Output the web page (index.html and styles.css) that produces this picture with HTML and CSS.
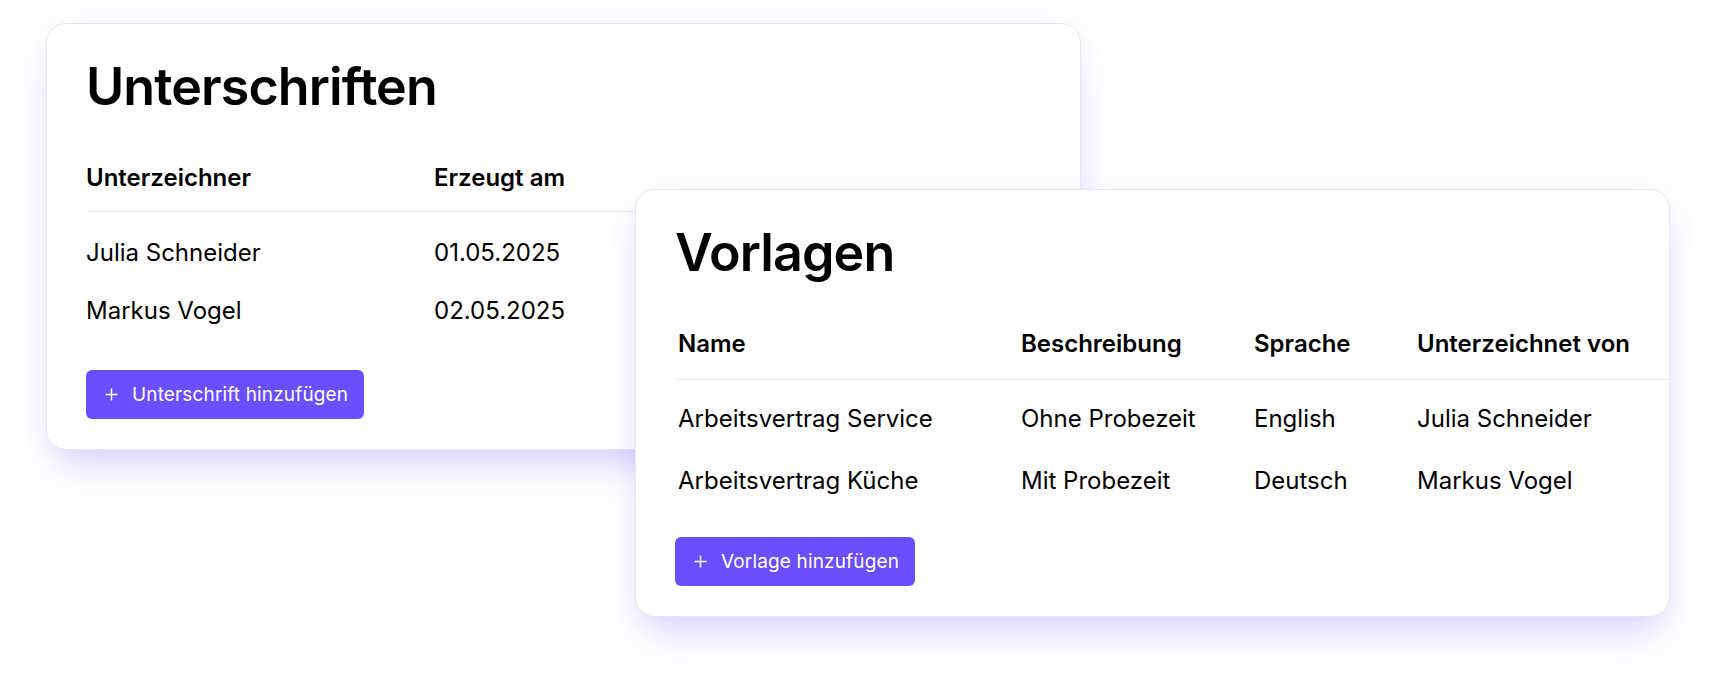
FILE: index.html
```html
<!DOCTYPE html>
<html lang="de">
<head>
  <meta charset="UTF-8" />
  <meta name="viewport" content="width=device-width, initial-scale=1.0"/>
  <title>Unterschriften &amp; Vorlagen</title>
  <link rel="stylesheet" href="styles.css">
</head>
<body>
  <div class="stage">
    <section class="card card-signatures">
      <h1>Unterschriften</h1>
      <table class="list">
        <colgroup>
          <col style="width: 348px">
          <col>
        </colgroup>
        <thead>
          <tr><th>Unterzeichner</th><th>Erzeugt am</th></tr>
        </thead>
        <tbody>
          <tr><td>Julia Schneider</td><td>01.05.2025</td></tr>
          <tr><td>Markus Vogel</td><td>02.05.2025</td></tr>
        </tbody>
      </table>
      <button class="add-btn" type="button">
        <svg width="13" height="13" viewBox="0 0 13 13"><path d="M6.5 0.5v12M0.5 6.5h12" stroke="#fff" stroke-width="1.5"/></svg>
        Unterschrift hinzufügen
      </button>
    </section>

    <section class="card card-templates">
      <h1>Vorlagen</h1>
      <table class="list">
        <colgroup>
          <col style="width: 343px">
          <col style="width: 233px">
          <col style="width: 163px">
          <col>
        </colgroup>
        <thead>
          <tr><th>Name</th><th>Beschreibung</th><th>Sprache</th><th>Unterzeichnet von</th></tr>
        </thead>
        <tbody>
          <tr><td>Arbeitsvertrag Service</td><td>Ohne Probezeit</td><td>English</td><td>Julia Schneider</td></tr>
          <tr><td>Arbeitsvertrag Küche</td><td>Mit Probezeit</td><td>Deutsch</td><td>Markus Vogel</td></tr>
        </tbody>
      </table>
      <button class="add-btn" type="button">
        <svg width="13" height="13" viewBox="0 0 13 13"><path d="M6.5 0.5v12M0.5 6.5h12" stroke="#fff" stroke-width="1.5"/></svg>
        Vorlage hinzufügen
      </button>
    </section>
  </div>
</body>
</html>
```

FILE: styles.css
```css
body {
  margin: 0;
  background: #fff;
  font-family: Inter, "Noto Sans", sans-serif;
  color: #000;
}
.stage {
  display: grid;
  width: 1715px;
  height: 683px;
}
.card {
  grid-area: 1 / 1;
  align-self: start;
  justify-self: start;
  box-sizing: border-box;
  width: 1035px;
  padding: 32px 0 30px 39px;
  background: #fff;
  border: 1px solid #e8e6f1;
  border-radius: 20px;
  box-shadow: 0 26px 36px -10px rgba(108, 84, 255, 0.22), 0 0 28px rgba(108, 84, 255, 0.07);
  overflow: hidden;
}
.card-signatures {
  margin: 23px 0 0 46px;
}
.card-templates {
  margin: 189px 0 0 635px;
}
h1 {
  margin: 0 0 45px;
  font-size: 52px;
  line-height: 1.2;
  font-weight: 600;
  letter-spacing: -0.9px;
}
.list {
  width: 100%;
  border-collapse: collapse;
  table-layout: fixed;
}
.list th {
  text-align: left;
  font-size: 24px;
  font-weight: 600;
  line-height: 30px;
  padding: 0 0 18px;
  border-bottom: 1px solid #ececf0;
}
.list td {
  font-size: 24px;
  line-height: 30px;
  padding: 14px 0;
  white-space: nowrap;
}
.list tbody tr:first-child td {
  padding-top: 26px;
}
.card-templates .list th {
  padding: 0 0 20px 3px;
}
.card-templates .list td {
  padding: 16px 0 16px 3px;
}
.card-templates .list tbody tr:first-child td {
  padding-top: 24px;
}
.add-btn {
  display: flex;
  align-items: center;
  gap: 14px;
  margin-top: 30px;
  height: 49px;
  padding: 0 16px 0 19px;
  border: none;
  border-radius: 6px;
  background: #6b4eff;
  color: #fff;
  font-family: inherit;
  font-size: 19px;
  font-weight: 400;
  letter-spacing: 0.15px;
  cursor: pointer;
}
.card-templates .add-btn {
  margin-top: 25px;
}
```
